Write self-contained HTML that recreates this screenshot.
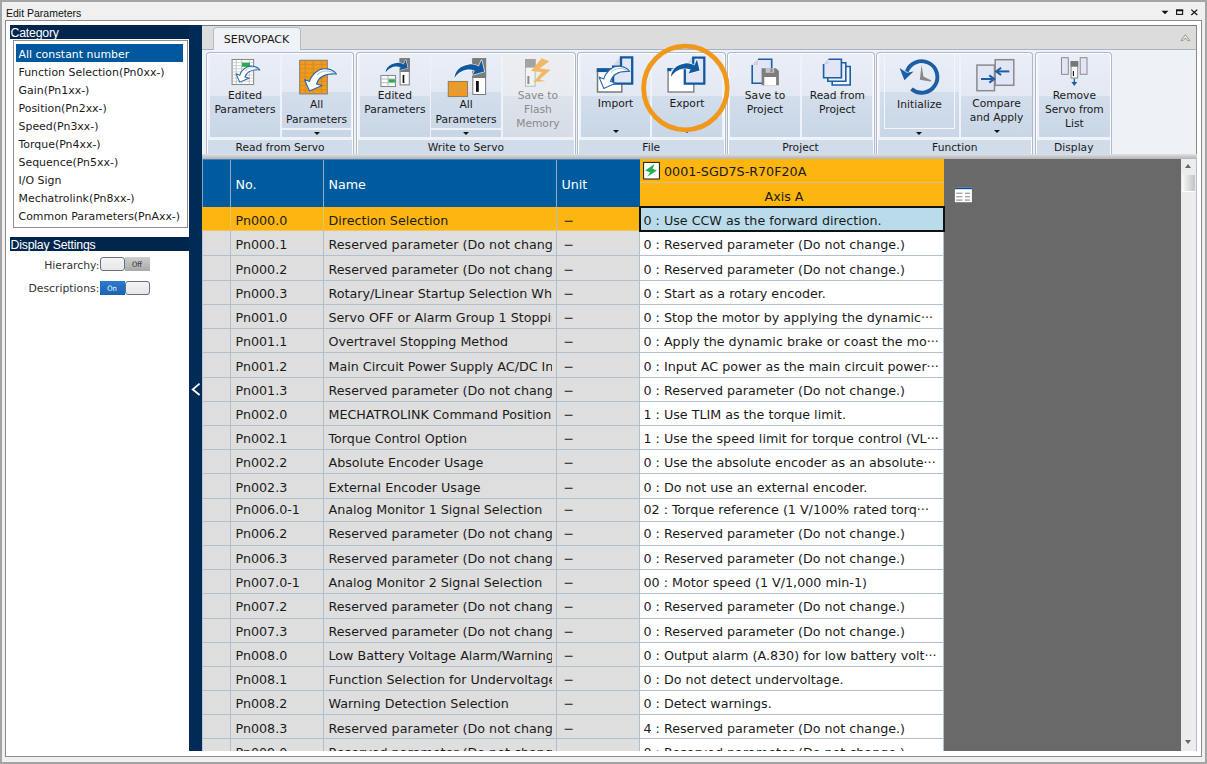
<!DOCTYPE html><html><head><meta charset="utf-8"><title>Edit Parameters</title><style>html,body{margin:0;padding:0}
body{width:1207px;height:764px;overflow:hidden;background:#a4a4a4}
#root{position:relative;width:1207px;height:764px;overflow:hidden;background:#a4a4a4;font-family:"DejaVu Sans","Liberation Sans",sans-serif;color:#1a1a1a}
#root div,#root span,#root i{position:absolute;box-sizing:border-box;white-space:nowrap}
#win{left:2px;top:2px;width:1203px;height:760px;background:#f0f0f0}
#title{left:6px;top:6px;font:10.5px/14px "Liberation Sans",sans-serif;color:#111}
#panel{left:5px;top:20px;width:1197px;height:737px;border:1px solid #8c8c8c;background:#fff}
.lhdr{left:10px;width:179px;height:14px;background:#00264d;color:#fff;font:12.3px/16px "Liberation Sans",sans-serif;padding-left:0.5px;overflow:hidden;letter-spacing:-0.2px}
#lbox{left:13px;top:40px;width:175px;height:188px;border:1px solid #8e8e8e;background:#fff}
.li{left:2px;width:167px;height:18px;padding-left:2.5px;font-size:10.95px;line-height:21.3px;color:#1a1a1a;overflow:hidden}
.li.sel{background:#00589c;color:#fff}
.lab{left:10px;width:89.3px;height:16px;text-align:right;font-size:10.8px;line-height:16px;color:#333}
.tog{left:99.5px;width:50px;height:14px}
.thumb{top:0;width:25px;height:14px;border:1px solid #5f7390;border-radius:3px;background:linear-gradient(#f4f4f4,#e6e6e6)}
.tt{top:0;width:25px;height:14px;text-align:center;font:7.5px/15.5px "DejaVu Sans Condensed","DejaVu Sans",sans-serif;overflow:hidden}
.tt.off{background:linear-gradient(#cfcfcf,#a9a9a9);color:#222}
.tt.on{background:linear-gradient(#2a7bcb,#1a64b0);color:#fff}
#split{left:189px;top:25px;width:13px;height:726px;background:#002b57}
#tabstrip{left:202px;top:25px;width:995px;height:25px;background:#dcdcdc;border-top:1px solid #7e7e7e;border-right:1px solid #8a8a8a;border-bottom:1px solid #a3b4c8}
#tab{left:212.5px;top:27px;width:88px;height:23px;background:#eff2f7;border:1px solid #b4bcc8;border-bottom:none;border-radius:4px 4px 0 0;text-align:center;font-size:11.1px;line-height:23px;color:#1a1a1a}
#rbody{left:202px;top:50px;width:995px;height:103.5px;background:#eef1f6;border-right:1px solid #8a8a8a}
#rshadow{left:202px;top:153.5px;width:995px;height:5.5px;background:linear-gradient(#dfe2e7,#c8c9cb 50%,#b4b4b4)}
.grp{top:51.5px;height:102px;border-radius:3.5px 3.5px 0 0;background:#eff2f8;border:1px solid #adb9c8;border-bottom:none;box-shadow:inset 1px 1px 0 0 rgba(255,255,255,.85),inset -1px 0 0 0 rgba(255,255,255,.85)}
.glab{left:1px;right:1px;top:87.2px;height:14px;background:#d0dcea;text-align:center;font-size:10.7px;line-height:16.6px;overflow:hidden}
.btn{top:1.5px;height:83px;background:linear-gradient(#e9eef7 0,#e3e9f3 50%,#d3deec 50%,#c8d6e6 100%)}
.btn.top{height:73.5px;background:linear-gradient(#e9eef7 0,#e3e9f3 51.7%,#d3deec 51.7%,#cbd8e8 100%)}
.btn.bot{top:77px;height:7.5px;background:#c9d6e6}
.btn.dis{background:linear-gradient(#eceef2 0,#e8ebf0 50%,#dde3ea 50%,#d6dde6 100%)}
.bl{left:0;width:100%;top:34.6px;text-align:center;font-size:10.7px;line-height:14.2px;color:#1a1a1a}
.bl.l2b{top:43.4px;line-height:15px}
.dis .bl{color:#8a8a8a}
.dd{left:50%;margin-left:-3px;top:2px;width:0;height:0;border-left:3px solid transparent;border-right:3px solid transparent;border-top:3.5px solid #111}
.initframe{left:4.5px;top:0;width:71px;height:74.5px;border:1px solid #f4f6fa;border-top:none}
#grid{left:202px;top:159px;width:995px;height:592px;background:#696969;overflow:hidden;font-size:12.7px}
#ghead{left:0;top:0;width:438px;height:48px;background:#005a9e}
.hc{top:0;height:48px;border-right:1px solid #8fa9c6}
.hc span{left:4.5px;top:17.3px;color:#fff;line-height:16px}
#ohead{left:438px;top:0;width:304px;height:48px;background:#fdb50f}
#oh1{left:0;top:0;width:304px;height:24px;border-bottom:1px solid #d9c08a}
#oh1 span{left:24px;top:5.2px;line-height:16px}
#oh2{left:0;top:24px;width:304px;height:24px}
#oh2 span{left:124.5px;top:6px;line-height:16px}
.row{left:0;width:742px;background:#dedede;border-bottom:1px solid #b2bfcf}
.row .c{top:0;height:100%;overflow:hidden;padding-left:4.5px;color:#1a1a1a;line-height:16px;padding-top:var(--p)}
.c0{left:0;width:29px;border-right:1px solid #b2bfcf}
.c1{left:29px;width:93px;border-right:1px solid #b2bfcf}
.c2{left:122px;width:227.5px}
.c3{left:354px;width:84px;padding-left:6.5px !important;border-left:1px solid #b2bfcf;border-right:1px solid #b2bfcf}
.row .c4{left:438px;width:304px;background:#fff;padding-left:3.5px;border-right:1px solid #b2bfcf}
.row.rsel{background:#fdb50f;border-bottom-color:#f0c46c}
.row.rsel .c{border-right-color:#e6c27a}
#selcell{left:437px;top:47px;width:306px;height:26px;border:2px solid #111}
.row.rsel .c4{background:#badcea}
#vscroll{left:979px;top:0;width:16px;height:592px;background:#ececec;border-right:1px solid #a9bdd4}
.sthumb{left:1px;top:16px;width:13px;height:17px;background:linear-gradient(90deg,#fafafa,#dedede 50%,#c2c2c2);border-bottom:1px solid #fff}
.up{left:4px;top:5px;width:0;height:0;border-left:3.5px solid transparent;border-right:3.5px solid transparent;border-bottom:4px solid #666}
.down{left:4px;top:581px;width:0;height:0;border-left:3.5px solid transparent;border-right:3.5px solid transparent;border-top:4px solid #666}
#ov{position:absolute;left:0;top:0;width:1207px;height:764px;pointer-events:none}

#gl1{left:0;top:0;width:1.4px;height:48px;background:#7da3c8}
#gl2{left:0;top:72px;width:1.4px;height:520px;background:#bcc5d2}
#ghead{border-top:1px solid #3f7fb8}
</style></head><body><div id="root">
<div id="win"></div>
<div id="title">Edit Parameters</div>
<div id="panel"></div>
<div class="lhdr" style="top:25px">Category</div>
<div id="lbox">
<div class="li sel" style="top:3px">All constant number</div>
<div class="li" style="top:21px">Function Selection(Pn0xx-)</div>
<div class="li" style="top:39px">Gain(Pn1xx-)</div>
<div class="li" style="top:57px">Position(Pn2xx-)</div>
<div class="li" style="top:75px">Speed(Pn3xx-)</div>
<div class="li" style="top:93px">Torque(Pn4xx-)</div>
<div class="li" style="top:111px">Sequence(Pn5xx-)</div>
<div class="li" style="top:129px">I/O Sign</div>
<div class="li" style="top:147px">Mechatrolink(Pn8xx-)</div>
<div class="li" style="top:165px">Common Parameters(PnAxx-)</div>
</div>
<div class="lhdr" style="top:237px">Display Settings</div>
<div class="lab" style="top:257.6px">Hierarchy:</div>
<div class="tog" style="top:257px"><span class="thumb" style="left:0"></span><span class="tt off" style="left:25px">Off</span></div>
<div class="lab" style="top:280.6px">Descriptions:</div>
<div class="tog" style="top:281px"><span class="tt on" style="left:0">On</span><span class="thumb" style="left:25px"></span></div>
<div id="split"></div>
<div id="tabstrip"></div><div id="tab">SERVOPACK</div>
<div id="rbody"></div><div id="rshadow"></div>
<div class="grp" style="left:206.3px;width:147.6px"><div class="glab">Read from Servo</div>
<div class="btn" style="left:2.7px;width:70px"><div class="bl">Edited<br>Parameters</div></div>
<div class="btn top" style="left:74.9px;width:68.8px"><div class="bl l2b">All<br>Parameters</div></div>
<div class="btn bot" style="left:74.9px;width:68.8px"><i class="dd"></i></div>
</div>
<div class="grp" style="left:356px;width:219.8px"><div class="glab">Write to Servo</div>
<div class="btn" style="left:3px;width:69.8px"><div class="bl">Edited<br>Parameters</div></div>
<div class="btn top" style="left:74.2px;width:69.8px"><div class="bl l2b">All<br>Parameters</div></div>
<div class="btn bot" style="left:74.2px;width:69.8px"><i class="dd"></i></div>
<div class="btn dis" style="left:146px;width:69.8px"><div class="bl">Save to<br>Flash<br>Memory</div></div>
</div>
<div class="grp" style="left:577px;width:148.5px"><div class="glab">File</div>
<div class="btn" style="left:3.2px;width:68.8px"><div class="bl" style="top:42.6px">Import</div><i class="dd" style="top:76px"></i></div>
<div class="btn" style="left:74px;width:70px"><div class="bl" style="top:42.6px">Export</div><i class="dd" style="top:76px"></i></div>
</div>
<div class="grp" style="left:726.5px;width:148px"><div class="glab">Project</div>
<div class="btn" style="left:2.5px;width:70px"><div class="bl">Save to<br>Project</div></div>
<div class="btn" style="left:74.7px;width:70.2px"><div class="bl">Read from<br>Project</div></div>
</div>
<div class="grp" style="left:876.2px;width:157.3px"><div class="glab">Function</div>
<div class="btn" style="left:2.8px;width:79px;background:linear-gradient(#e9eef7 0,#e3e9f3 46%,#d3deec 46%,#c8d6e6 100%)"><div class="initframe"></div><div class="bl" style="top:44px">Initialize</div><i class="dd" style="top:77.7px"></i></div>
<div class="btn" style="left:84.3px;width:70.2px"><div class="bl" style="top:42.6px;line-height:14.6px">Compare<br>and Apply</div><i class="dd" style="top:75.7px"></i></div>
</div>
<div class="grp" style="left:1035.3px;width:77px"><div class="glab">Display</div>
<div class="btn" style="left:2.7px;width:70.7px"><div class="bl">Remove<br>Servo from<br>List</div></div>
</div>
<div id="grid">
<div id="ghead"><div class="hc" style="left:0;width:29px"></div><div class="hc" style="left:29px;width:93px"><span>No.</span></div><div class="hc" style="left:122px;width:233px"><span>Name</span></div><div class="hc" style="left:355px;width:83px;border-right:none"><span>Unit</span></div></div>
<div id="ohead"><div id="oh1"><span>0001-SGD7S-R70F20A</span></div><div id="oh2"><span>Axis A</span></div></div>
<div class="row rsel" style="top:48px;height:24px;--p:5.9px"><div class="c c0"></div><div class="c c1">Pn000.0</div><div class="c c2">Direction Selection</div><div class="c c3">−</div><div class="c c4">0 : Use CCW as the forward direction.</div></div>
<div class="row" style="top:72px;height:25px;--p:5.8px"><div class="c c0"></div><div class="c c1">Pn000.1</div><div class="c c2">Reserved parameter (Do not change.)</div><div class="c c3">−</div><div class="c c4">0 : Reserved parameter (Do not change.)</div></div>
<div class="row" style="top:97px;height:25px;--p:5.5px"><div class="c c0"></div><div class="c c1">Pn000.2</div><div class="c c2">Reserved parameter (Do not change.)</div><div class="c c3">−</div><div class="c c4">0 : Reserved parameter (Do not change.)</div></div>
<div class="row" style="top:122px;height:24px;--p:4.8px"><div class="c c0"></div><div class="c c1">Pn000.3</div><div class="c c2">Rotary/Linear Startup Selection When</div><div class="c c3">−</div><div class="c c4">0 : Start as a rotary encoder.</div></div>
<div class="row" style="top:146px;height:24px;--p:5.1px"><div class="c c0"></div><div class="c c1">Pn001.0</div><div class="c c2">Servo OFF or Alarm Group 1 Stopping</div><div class="c c3">−</div><div class="c c4">0 : Stop the motor by applying the dynamic···</div></div>
<div class="row" style="top:170px;height:24px;--p:5.3px"><div class="c c0"></div><div class="c c1">Pn001.1</div><div class="c c2">Overtravel Stopping Method</div><div class="c c3">−</div><div class="c c4">0 : Apply the dynamic brake or coast the mo···</div></div>
<div class="row" style="top:194px;height:25px;--p:5.6px"><div class="c c0"></div><div class="c c1">Pn001.2</div><div class="c c2">Main Circuit Power Supply AC/DC Input</div><div class="c c3">−</div><div class="c c4">0 : Input AC power as the main circuit power···</div></div>
<div class="row" style="top:219px;height:24px;--p:4.9px"><div class="c c0"></div><div class="c c1">Pn001.3</div><div class="c c2">Reserved parameter (Do not change.)</div><div class="c c3">−</div><div class="c c4">0 : Reserved parameter (Do not change.)</div></div>
<div class="row" style="top:243px;height:24px;--p:5.2px"><div class="c c0"></div><div class="c c1">Pn002.0</div><div class="c c2">MECHATROLINK Command Position</div><div class="c c3">−</div><div class="c c4">1 : Use TLIM as the torque limit.</div></div>
<div class="row" style="top:267px;height:24px;--p:5.2px"><div class="c c0"></div><div class="c c1">Pn002.1</div><div class="c c2">Torque Control Option</div><div class="c c3">−</div><div class="c c4">1 : Use the speed limit for torque control (VL···</div></div>
<div class="row" style="top:291px;height:24px;--p:5.2px"><div class="c c0"></div><div class="c c1">Pn002.2</div><div class="c c2">Absolute Encoder Usage</div><div class="c c3">−</div><div class="c c4">0 : Use the absolute encoder as an absolute···</div></div>
<div class="row" style="top:315px;height:25px;--p:5.5px"><div class="c c0"></div><div class="c c1">Pn002.3</div><div class="c c2">External Encoder Usage</div><div class="c c3">−</div><div class="c c4">0 : Do not use an external encoder.</div></div>
<div class="row" style="top:340px;height:23px;--p:3.2px"><div class="c c0"></div><div class="c c1">Pn006.0-1</div><div class="c c2">Analog Monitor 1 Signal Selection</div><div class="c c3">−</div><div class="c c4">02 : Torque reference (1 V/100% rated torq···</div></div>
<div class="row" style="top:363px;height:24px;--p:4.3px"><div class="c c0"></div><div class="c c1">Pn006.2</div><div class="c c2">Reserved parameter (Do not change.)</div><div class="c c3">−</div><div class="c c4">0 : Reserved parameter (Do not change.)</div></div>
<div class="row" style="top:387px;height:24px;--p:4.7px"><div class="c c0"></div><div class="c c1">Pn006.3</div><div class="c c2">Reserved parameter (Do not change.)</div><div class="c c3">−</div><div class="c c4">0 : Reserved parameter (Do not change.)</div></div>
<div class="row" style="top:411px;height:24px;--p:5.0px"><div class="c c0"></div><div class="c c1">Pn007.0-1</div><div class="c c2">Analog Monitor 2 Signal Selection</div><div class="c c3">−</div><div class="c c4">00 : Motor speed (1 V/1,000 min-1)</div></div>
<div class="row" style="top:435px;height:25px;--p:5.3px"><div class="c c0"></div><div class="c c1">Pn007.2</div><div class="c c2">Reserved parameter (Do not change.)</div><div class="c c3">−</div><div class="c c4">0 : Reserved parameter (Do not change.)</div></div>
<div class="row" style="top:460px;height:24px;--p:4.8px"><div class="c c0"></div><div class="c c1">Pn007.3</div><div class="c c2">Reserved parameter (Do not change.)</div><div class="c c3">−</div><div class="c c4">0 : Reserved parameter (Do not change.)</div></div>
<div class="row" style="top:484px;height:24px;--p:5.0px"><div class="c c0"></div><div class="c c1">Pn008.0</div><div class="c c2">Low Battery Voltage Alarm/Warning</div><div class="c c3">−</div><div class="c c4">0 : Output alarm (A.830) for low battery volt···</div></div>
<div class="row" style="top:508px;height:24px;--p:5.2px"><div class="c c0"></div><div class="c c1">Pn008.1</div><div class="c c2">Function Selection for Undervoltage</div><div class="c c3">−</div><div class="c c4">0 : Do not detect undervoltage.</div></div>
<div class="row" style="top:532px;height:24px;--p:5.3px"><div class="c c0"></div><div class="c c1">Pn008.2</div><div class="c c2">Warning Detection Selection</div><div class="c c3">−</div><div class="c c4">0 : Detect warnings.</div></div>
<div class="row" style="top:556px;height:24px;--p:5.5px"><div class="c c0"></div><div class="c c1">Pn008.3</div><div class="c c2">Reserved parameter (Do not change.)</div><div class="c c3">−</div><div class="c c4">4 : Reserved parameter (Do not change.)</div></div>
<div class="row" style="top:580px;height:25px;--p:5.7px"><div class="c c0"></div><div class="c c1">Pn009.0</div><div class="c c2">Reserved parameter (Do not change.)</div><div class="c c3">−</div><div class="c c4">0 : Reserved parameter (Do not change.)</div></div>
<div id="gl1"></div><div id="gl2"></div><div id="selcell"></div>
<div id="vscroll"><i class="up"></i><div class="sthumb"></div><i class="down"></i></div>
</div>
<svg id="ov" width="1207" height="764" viewBox="0 0 1207 764">
<path d="M1161.5,10.8 L1168.5,10.8 L1165,14.3 Z" fill="#111"/>
<rect x="1176.6" y="10.6" width="6" height="3.8" fill="none" stroke="#111" stroke-width="1.1"/><rect x="1176" y="9.3" width="7.2" height="1.8" fill="#111"/>
<path d="M1191.3,9.6 L1197.3,15 M1197.3,9.6 L1191.3,15" stroke="#111" stroke-width="1.25" fill="none"/>
<path d="M1181,40.5 L1185.4,34.6 L1189.8,40.5 L1187.6,40.5 L1185.4,38 L1183.2,40.5 Z" fill="#f3e6cf" stroke="#8e8e8e" stroke-width="0.9" stroke-linejoin="round"/>
<path d="M199.6,383.6 L192.8,389.4 L199.6,395" fill="none" stroke="#fff" stroke-width="1.9"/>
<rect x="232.1" y="59.5" width="21.5" height="25" fill="#fff" stroke="#8a8a8a" stroke-width="1.1"/><path d="M236.2,60 V84.5" stroke="#b9b9b9" stroke-width="0.8"/><path d="M241.6,60 V84.5" stroke="#b9b9b9" stroke-width="0.8"/><path d="M249.3,60 V84.5" stroke="#b9b9b9" stroke-width="0.8"/><path d="M232.5,62.6 H253.3" stroke="#bdbdbd" stroke-width="0.7"/><path d="M232.5,65.7 H253.3" stroke="#bdbdbd" stroke-width="0.7"/><path d="M232.5,68.8 H253.3" stroke="#bdbdbd" stroke-width="0.7"/><path d="M232.5,71.9 H253.3" stroke="#bdbdbd" stroke-width="0.7"/><path d="M232.5,75.0 H253.3" stroke="#bdbdbd" stroke-width="0.7"/><path d="M232.5,78.1 H253.3" stroke="#bdbdbd" stroke-width="0.7"/><path d="M232.5,81.2 H253.3" stroke="#bdbdbd" stroke-width="0.7"/><rect x="242" y="62.8" width="8" height="4" fill="#22b14c"/><g transform="translate(236,65.2) scale(0.745,0.72)"><path d="M32,6.5 C27.5,0.5 17.5,-0.5 11.5,4.5 C7.5,8 5.5,11.5 5,14 L0,12 L5,23.5 L17.5,18 L12,16.5 C13.5,11.5 18.5,5.5 32,6.5 Z" fill="#fff" stroke="#2a69ad" stroke-width="1.476510067114094" stroke-linejoin="round"/><path d="M30,5.8 C25,2.5 17,2.5 12.5,7.5" fill="none" stroke="#9fc0e0" stroke-width="1"/></g>
<rect x="299.7" y="60.3" width="27.6" height="33.6" fill="#f59a16" stroke="#85807a" stroke-width="1.1"/><path d="M305.2,61 V93.5" stroke="#b88a4a" stroke-width="0.9"/><path d="M313.2,61 V93.5" stroke="#b88a4a" stroke-width="0.9"/><path d="M321.6,61 V93.5" stroke="#b88a4a" stroke-width="0.9"/><path d="M300.2,64.5 H327" stroke="#d08a2a" stroke-width="0.8"/><path d="M300.2,68.7 H327" stroke="#d08a2a" stroke-width="0.8"/><path d="M300.2,72.9 H327" stroke="#d08a2a" stroke-width="0.8"/><path d="M300.2,77.1 H327" stroke="#d08a2a" stroke-width="0.8"/><path d="M300.2,81.3 H327" stroke="#d08a2a" stroke-width="0.8"/><path d="M300.2,85.5 H327" stroke="#d08a2a" stroke-width="0.8"/><path d="M300.2,89.7 H327" stroke="#d08a2a" stroke-width="0.8"/><g transform="translate(304.5,67.5) scale(1,1)"><path d="M32,6.5 C27.5,0.5 17.5,-0.5 11.5,4.5 C7.5,8 5.5,11.5 5,14 L0,12 L5,23.5 L17.5,18 L12,16.5 C13.5,11.5 18.5,5.5 32,6.5 Z" fill="#fff" stroke="#2a69ad" stroke-width="1.1" stroke-linejoin="round"/><path d="M30,5.8 C25,2.5 17,2.5 12.5,7.5" fill="none" stroke="#9fc0e0" stroke-width="1"/></g>
<rect x="400.1" y="58.7" width="9.2" height="26.2" fill="#fff" stroke="#7b7b7b" stroke-width="1"/><rect x="399.6" y="58.2" width="10.2" height="13.799999999999997" fill="#7b7b7b"/><rect x="402.6" y="75" width="1.7" height="8" fill="#111"/><path d="M404.5,58.2 h5.3 v13.8 h-5.3z" fill="#7b7b7b"/><rect x="380.9" y="75.5" width="14.6" height="11" fill="#fff" stroke="#8a8a8a" stroke-width="1.1"/><path d="M388,76 V86.5 M381,79 H395.5 M381,82.7 H395.5" stroke="#a8a8a8" stroke-width="0.8" fill="none"/><rect x="388.6" y="79.3" width="6.3" height="3" fill="#22b14c"/><g transform="translate(385.6,60) scale(0.773,0.72)"><path d="M0,17.4 C0.2,11.1 5,5.1 14,4 C18,3.6 21.5,4.8 23.3,6.2 L26,0 L28.6,11 L17.4,14.2 L19.6,10.2 C14,7.8 5.5,9.1 0,17.4 Z" fill="#11599f" stroke="rgba(255,255,255,0.75)" stroke-width="1.6" paint-order="stroke" stroke-linejoin="round"/></g>
<rect x="472.8" y="58.7" width="12.8" height="35.8" fill="#fff" stroke="#7b7b7b" stroke-width="1"/><rect x="472.3" y="58.2" width="13.8" height="19.799999999999997" fill="#7b7b7b"/><rect x="476" y="81" width="2.8" height="10.8" fill="#111"/><rect x="448.3" y="81.5" width="19.2" height="15" fill="#f59a16" stroke="#8a8278" stroke-width="1.1"/><path d="M457.9,82 V96.2 M448.8,86.4 H467.2 M448.8,91.4 H467.2" stroke="#c8a070" stroke-width="0.9" fill="none"/><g transform="translate(454.5,60.3) scale(1.04,1.02)"><path d="M0,17.4 C0.2,11.1 5,5.1 14,4 C18,3.6 21.5,4.8 23.3,6.2 L26,0 L28.6,11 L17.4,14.2 L19.6,10.2 C14,7.8 5.5,9.1 0,17.4 Z" fill="#11599f" stroke="rgba(255,255,255,0.75)" stroke-width="1.6" paint-order="stroke" stroke-linejoin="round"/></g>
<rect x="525.5" y="59.5" width="9.6" height="26.7" fill="#f3f3f3" stroke="#b9b9b9" stroke-width="1"/><rect x="525" y="59" width="10.6" height="8.599999999999994" fill="#a3a3a3"/><rect x="527.4" y="76" width="2" height="8" fill="#8a8a8a"/><path d="M541.6,58.2 L549.3,61.2 L539.5,68.4 L550.6,69.8 L539.5,79.6 L545.5,80.9 L533,82 L537.5,77.6 L541.8,72 L531,71 Z" fill="#f2b866"/>
<rect x="597.5" y="69" width="24.3" height="23" fill="#fff" stroke="#7a7a7a" stroke-width="1.5"/><rect x="596.8" y="68.3" width="25.7" height="3.8" fill="#11599f"/><path d="M612.2,66.4 L620,57 L620,66.4 Z" fill="#d6d8df"/><path d="M621,57.4 H632.2 V83.7 H613.1 V66.7 H621 Z" fill="#e1e5f5" stroke="#11599f" stroke-width="2.3" stroke-linejoin="miter"/><g transform="translate(599,65) scale(0.96,1.0)"><path d="M32,6.5 C27.5,0.5 17.5,-0.5 11.5,4.5 C7.5,8 5.5,11.5 5,14 L0,12 L5,23.5 L17.5,18 L12,16.5 C13.5,11.5 18.5,5.5 32,6.5 Z" fill="#fff" stroke="#2a69ad" stroke-width="1.1458333333333335" stroke-linejoin="round"/><path d="M30,5.8 C25,2.5 17,2.5 12.5,7.5" fill="none" stroke="#9fc0e0" stroke-width="1"/></g>
<rect x="668.1" y="68.7" width="25.7" height="23.3" fill="#fff" stroke="#808080" stroke-width="1.4"/><rect x="667.4" y="68" width="4" height="3.2" fill="#11599f"/><path d="M684.2,66.4 L692,57 L692,66.4 Z" fill="#d6d8df"/><path d="M693.2,57.6 H704.3 V83.7 H684.8 V66.7 H693.2 Z" fill="#e1e5f5" stroke="#11599f" stroke-width="2.3" stroke-linejoin="miter"/><g transform="translate(671,59.4) scale(1,1)"><path d="M0,17.4 C0.2,11.1 5,5.1 14,4 C18,3.6 21.5,4.8 23.3,6.2 L26,0 L28.6,11 L17.4,14.2 L19.6,10.2 C14,7.8 5.5,9.1 0,17.4 Z" fill="#11599f" stroke="rgba(255,255,255,0.75)" stroke-width="1.6" paint-order="stroke" stroke-linejoin="round"/></g>
<path d="M757.2,59.2 L771.7,59.2 L771.7,83.2 L752.2,83.2 L752.2,64.2 Z" fill="#e1e5f5"/><path d="M758.0,59.2 L758.0,65.0 L752.2,65.0 Z" fill="#cfd2dc"/><path d="M758.0,59.2 L771.7,59.2 L771.7,83.2 L752.2,83.2 L752.2,65.0" fill="none" stroke="#1b5ea6" stroke-width="1.6" stroke-linejoin="miter" stroke-linecap="butt"/><path d="M761.6,68.2 H776 L778.9,71 V85.2 H761.6 Z" fill="#7d7d7d"/><rect x="764.3" y="77" width="11.8" height="8.2" fill="#fff"/><rect x="765.6" y="68.2" width="8.6" height="4.6" fill="#c4c4c4"/><rect x="770.5" y="69" width="2" height="3" fill="#8a8a8a"/>
<path d="M832.2,66.5 L850.2,66.5 L850.2,85.0 L832.2,85.0 L832.2,66.5 Z" fill="#f4f5fb"/><path d="M833.0,66.5 L850.2,66.5 L850.2,85.0 L832.2,85.0 L832.2,67.3" fill="none" stroke="#1b5ea6" stroke-width="1.6" stroke-linejoin="miter" stroke-linecap="butt"/><path d="M827.8,62.7 L845.8,62.7 L845.8,81.2 L827.8,81.2 L827.8,62.7 Z" fill="#eceef8"/><path d="M828.5999999999999,62.7 L845.8,62.7 L845.8,81.2 L827.8,81.2 L827.8,63.5" fill="none" stroke="#1b5ea6" stroke-width="1.6" stroke-linejoin="miter" stroke-linecap="butt"/><path d="M827.6,59.2 L841.4,59.2 L841.4,77.80000000000001 L823.6,77.80000000000001 L823.6,63.2 Z" fill="#e1e5f5"/><path d="M828.4,59.2 L828.4,64.0 L823.6,64.0 Z" fill="#cfd2dc"/><path d="M828.4,59.2 L841.4,59.2 L841.4,77.80000000000001 L823.6,77.80000000000001 L823.6,64.0" fill="none" stroke="#1b5ea6" stroke-width="1.6" stroke-linejoin="miter" stroke-linecap="butt"/>
<path d="M906.75,71.60 A15.8,15.8 0 1 1 911.44,89.10" fill="none" stroke="#1b5ea6" stroke-width="3.9"/><path d="M899.6,68 L904.4,80.2 L913.6,71.4 L906.8,72.8 Z" fill="#1b5ea6"/><path d="M921.6,65 L923.4,76.6 L931.4,80.6 L930.6,81.6 L919.8,79.8 Z" fill="#888"/>
<rect x="976.9" y="65.1" width="17.6" height="25.6" fill="#e1e5f5" stroke="#8a8a8a" stroke-width="1.5"/><rect x="995.2" y="59.7" width="18.6" height="25.6" fill="#e1e5f5" stroke="#8a8a8a" stroke-width="1.5"/><path d="M981,79 H992.5" stroke="#1b5ea6" stroke-width="2" fill="none"/><path d="M989.3,75.4 L994.2,79 L989.3,82.6" stroke="#1b5ea6" stroke-width="2" fill="none"/><path d="M1009.3,71.4 H997.5" stroke="#1b5ea6" stroke-width="2" fill="none"/><path d="M1001.1,67.8 L996.2,71.4 L1001.1,75" stroke="#1b5ea6" stroke-width="2" fill="none"/>
<rect x="1061.5" y="57.7" width="6.8" height="16.6" fill="#e1e5f5" stroke="#8a8a8a" stroke-width="1"/><rect x="1080.2" y="57.7" width="6.8" height="16.6" fill="#e1e5f5" stroke="#8a8a8a" stroke-width="1"/><rect x="1071.1" y="61.6" width="6.6" height="16.4" fill="#fff" stroke="#8a8a8a" stroke-width="1"/><rect x="1070.6" y="61.1" width="7.6" height="5.6" fill="#777"/><rect x="1072.8" y="71" width="1.2" height="5" fill="#222"/><path d="M1074.3,78.6 V82.5" stroke="#1b5ea6" stroke-width="1.3"/><path d="M1071.4,81.9 H1077.2 L1074.3,86 Z" fill="#1b5ea6"/>
<circle cx="685.4" cy="88" r="41.8" fill="none" stroke="#f0981c" stroke-width="4.8"/>
<rect x="643.6" y="162.4" width="15.8" height="16.6" fill="#fff" stroke="#1a1a1a" stroke-width="1"/>
<path d="M654.6,163.9 L645.1,170.4 L650,172.3 L647.6,176.6 L657,170.6 L652.6,168.8 Z" fill="#22b14c"/>
<rect x="954.9" y="187.6" width="17" height="14.6" fill="#fff"/><rect x="954.9" y="187.6" width="17" height="1.6" fill="#0b4a8c"/>
<rect x="956.2" y="192.6" width="6.3" height="1.4" fill="#aaa69e"/><rect x="964.9" y="192.6" width="5.2" height="1.4" fill="#aaa69e"/>
<rect x="956.2" y="196" width="6.3" height="1.4" fill="#aaa69e"/><rect x="964.9" y="196" width="5.2" height="1.4" fill="#aaa69e"/>
<rect x="956.2" y="199.4" width="6.3" height="1.4" fill="#aaa69e"/><rect x="964.9" y="199.4" width="5.2" height="1.4" fill="#aaa69e"/>
</svg>
</div></body></html>
